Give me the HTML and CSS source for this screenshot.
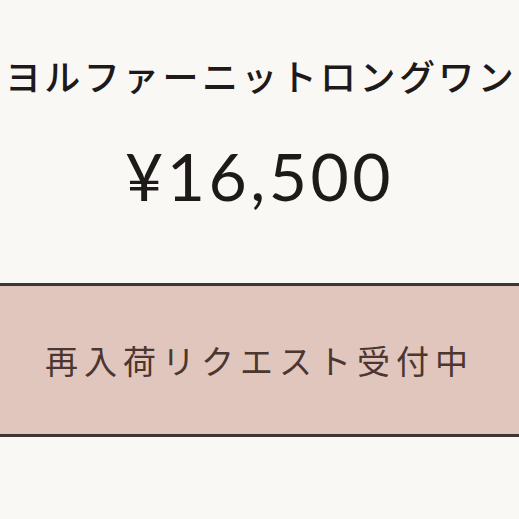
FILE: index.html
```html
<!DOCTYPE html>
<html lang="ja">
<head>
<meta charset="utf-8">
<link rel="stylesheet" href="styles.css">
</head>
<body>
<main class="product">
  <h1 class="title">ヨルファーニットロングワン</h1>
  <p class="price">¥16,500</p>
  <div class="restock">再入荷リクエスト受付中</div>
</main>
</body>
</html>
```
FILE: styles.css
```css
html, body {
  margin: 0;
  padding: 0;
  background: #faf8f5;
}
.product {
  display: flex;
  flex-direction: column;
  align-items: stretch;
  width: 519px;
  overflow: hidden;
}
.title {
  margin: 0;
  padding-top: 52px;
  height: 46px;
  display: flex;
  justify-content: center;
  white-space: nowrap;
  font-family: "Noto Sans CJK JP", sans-serif;
  font-weight: 500;
  font-size: 36px;
  line-height: 46px;
  letter-spacing: 3.4px;
  text-indent: 3px;
  color: #1e1a1a;
}
.price {
  margin: 0;
  padding-top: 38px;
  text-align: center;
  font-family: Lato, sans-serif;
  font-size: 66px;
  line-height: 80px;
  letter-spacing: 3.5px;
  color: #1e1a1a;
}
.restock {
  margin: 67px -4px 0;
  height: 148px;
  border-top: 3px solid #3e3634;
  border-bottom: 3px solid #3e3634;
  background: #e1c6be;
  display: flex;
  align-items: center;
  justify-content: center;
  font-family: "Noto Sans CJK JP", sans-serif;
  font-weight: 400;
  font-size: 33px;
  letter-spacing: 6px;
  color: #4b3630;
}
```
